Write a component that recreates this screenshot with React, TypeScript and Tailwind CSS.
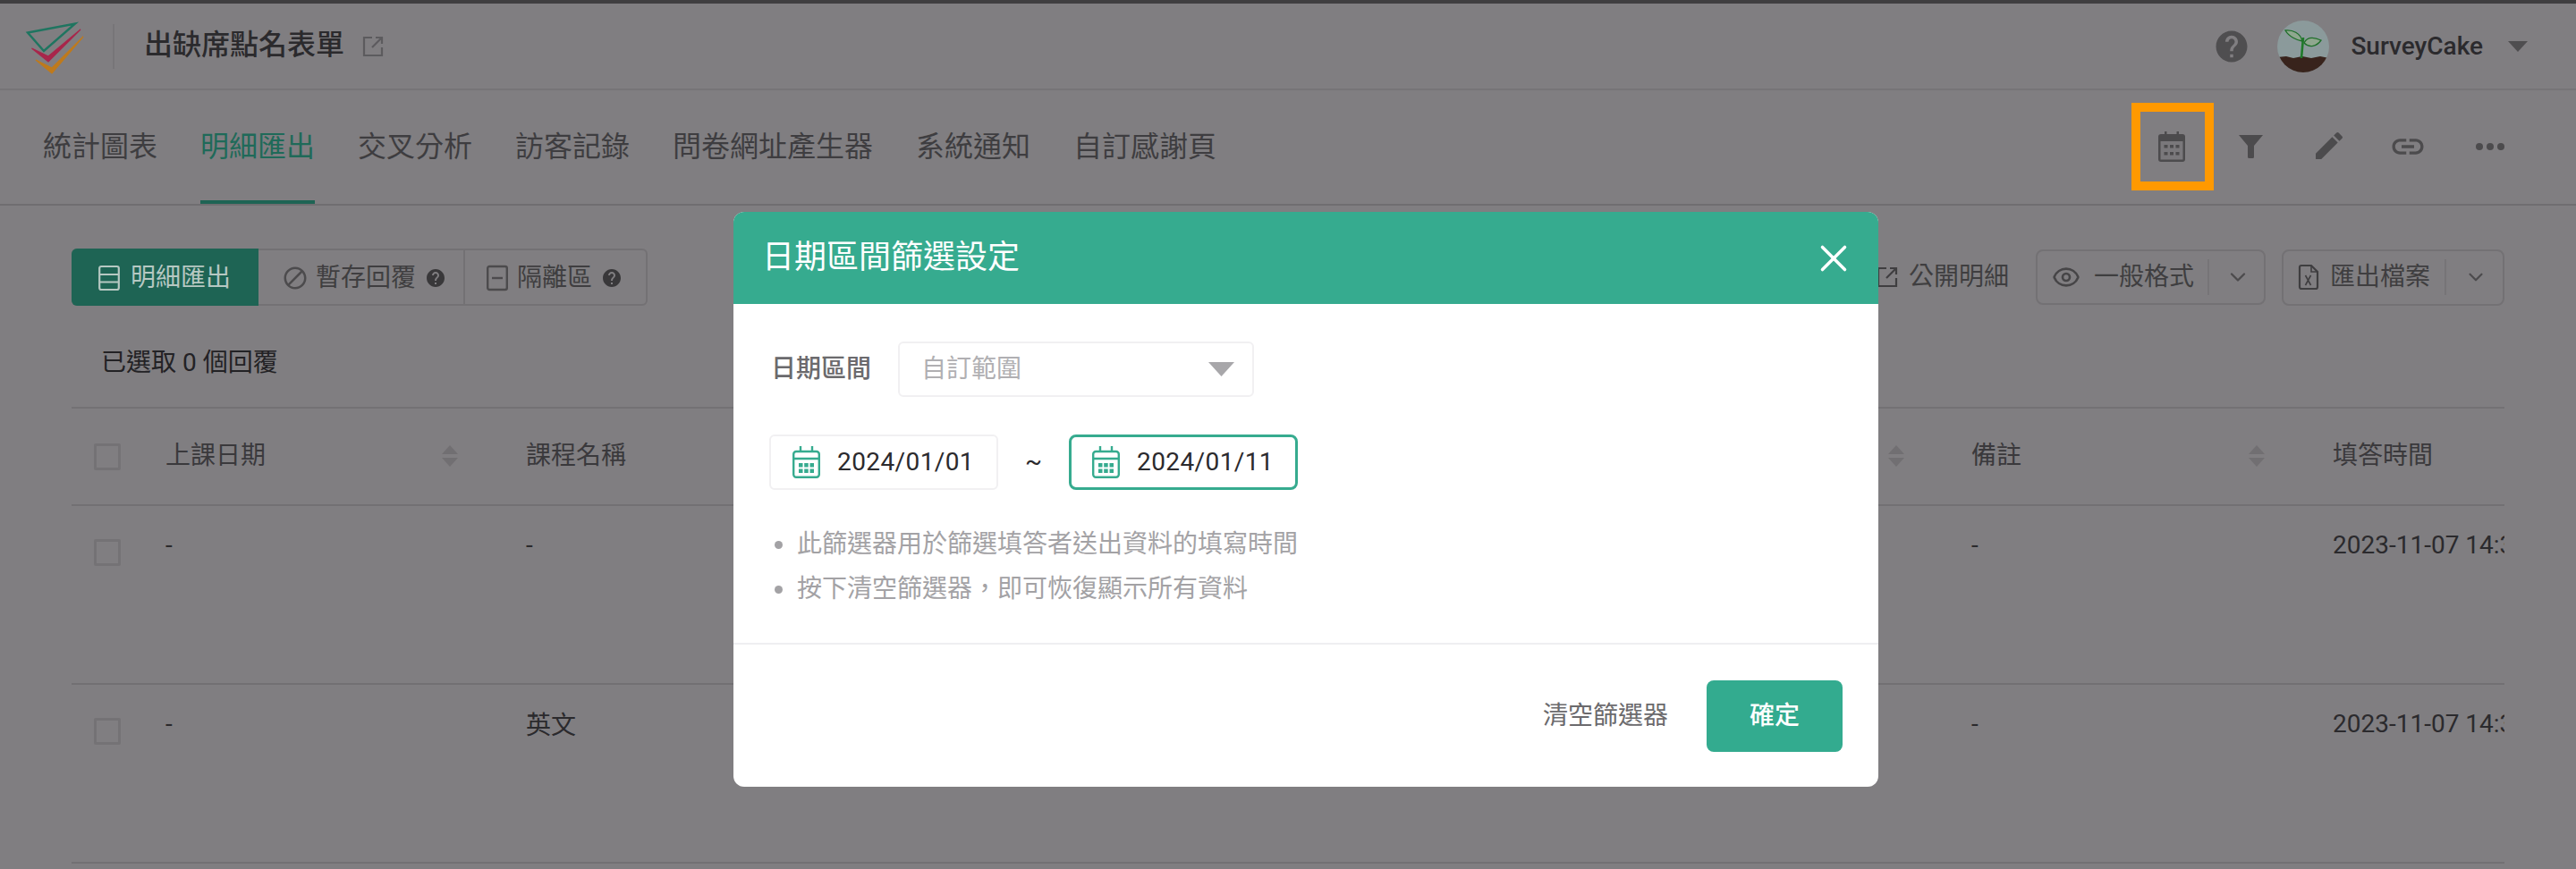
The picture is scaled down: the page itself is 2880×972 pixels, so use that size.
import React from "react";
import { MdEdit, MdLink, MdHelp, MdBlock } from "react-icons/md";
import { ChevronDown, Eye, X } from "lucide-react";

const Ext = ({ c = "#5c5b5e", s = 24 }: { c?: string; s?: number }) => (
  <svg width={s} height={s} viewBox="0 0 24 24" fill="none" stroke={c} strokeWidth="2.2">
    <path d="M11 2H2v20h20v-9" />
    <path d="M11 13 22 2M15 2h7v7" />
  </svg>
);

const Sort = () => (
  <svg width="18" height="24" viewBox="0 0 18 24" fill="#716f72" className="shrink-0">
    <path d="M9 0 18 10H0Z" />
    <path d="M0 14H18L9 24Z" />
  </svg>
);

const GreenCal = () => (
  <svg width="31" height="36" viewBox="0 0 31 36" fill="none" stroke="#36ab8f" strokeWidth="2.4" className="shrink-0">
    <rect x="1.2" y="6" width="28.6" height="28.8" rx="3" />
    <path d="M1.2 14H29.8M9 0V6M22 0V6" />
    <path fill="#36ab8f" stroke="none" d="M7 19h4.5v4.5H7zM13.2 19h4.5v4.5h-4.5zM19.5 19H24v4.5h-4.5zM7 25.5h4.5V30H7zM13.2 25.5h4.5V30h-4.5zM19.5 25.5H24V30h-4.5z" />
  </svg>
);

const Check = () => <div className="w-[30px] h-[30px] border-[3px] border-[#747275] rounded-[2px]" />;

const Tab = ({ t, a }: { t: string; a?: boolean }) => (
  <div className={`h-full flex items-center pt-[2px] border-b-4 ${a ? "border-[#1e6454] text-[#1f6a59]" : "border-transparent text-[#3e3d40]"}`}>{t}</div>
);

const Logo = () => (
  <svg width="66" height="60" viewBox="26 23 66 60" fill="none" strokeLinejoin="miter" className="mt-[5px]">
    <path d="M29 35.5 82 25.5 47 56Z" stroke="#1f7560" strokeWidth="2.4" />
    <path d="M33.5 53 52 68 88 32 52 62Z" fill="#a8264b" stroke="#a8264b" strokeWidth="1.2" />
    <path d="M38 66 56 81 91 40 56 75Z" fill="#bf7a1c" stroke="#bf7a1c" strokeWidth="1.2" />
  </svg>
);

const Avatar = () => (
  <svg width="58" height="60" viewBox="0 0 58 60" className="shrink-0">
    <defs>
      <clipPath id="av"><circle cx="29" cy="30" r="29" /></clipPath>
    </defs>
    <g clipPath="url(#av)">
      <rect width="58" height="60" fill="#8b9a9b" />
      <path d="M0 42 10 41 18 43 28 41 38 43 48 41 58 43V60H0Z" fill="#38231c" />
      <path d="M27 43 29 20" stroke="#1f7a2a" strokeWidth="2.6" fill="none" />
      <path d="M28 24C22 23 13 19 9 12 17 11 26 15 28 24Z" fill="#8fa78f" stroke="#1f6f2a" strokeWidth="1.3" />
      <path d="M30 26C33 20 40 19 49 23 44 30 36 32 30 26Z" fill="#8fa78f" stroke="#1f6f2a" strokeWidth="1.3" />
    </g>
  </svg>
);

const widths = ["w-[105px]", "w-[403px]", "w-[1616px]", "w-[404px]", "w-[192px]"];

export default function App() {
  return (
    <div className="relative w-[2880px] h-[972px] overflow-hidden bg-[#807e81] font-['Roboto','Noto_Sans_CJK_TC',sans-serif]">
      <div className="h-[4px] bg-[#3f3e40]" />
      {/* header */}
      <div className="h-[97px] border-b-[2px] border-[#767477] flex items-center pl-[28px] pr-[54px]">
        <Logo />
        <div className="w-[2px] h-[50px] bg-[#777578] ml-[32px] mr-[33px]" />
        <div className="text-[32px] font-medium text-[#2b2a2d] leading-none pb-[3px]">出缺席點名表單</div>
        <div className="ml-[20px]"><Ext /></div>
        <div className="ml-auto flex items-center">
          <MdHelp size={42} color="#4f4e50" />
          <div className="ml-[30px]"><Avatar /></div>
          <div className="ml-[24px] text-[28px] font-medium text-[#2b2a2d] leading-none">SurveyCake</div>
          <svg width="22" height="12" viewBox="0 0 22 12" className="ml-[28px]"><path d="M0 0H22L11 12Z" fill="#4f4e50" /></svg>
        </div>
      </div>
      {/* tabs */}
      <div className="relative h-[129px] border-b-[2px] border-[#6f6d70] pl-[48px] flex gap-[48px] text-[32px] leading-none">
        <Tab t="統計圖表" />
        <Tab t="明細匯出" a />
        <Tab t="交叉分析" />
        <Tab t="訪客記錄" />
        <Tab t="問卷網址產生器" />
        <Tab t="系統通知" />
        <Tab t="自訂感謝頁" />
        <div className="absolute left-[2383px] top-[14px] w-[92px] h-[98px] border-[10px] border-[#ff9900]" />
        <div className="absolute left-[2413px] top-[46px]">
          <svg width="30" height="34" viewBox="0 0 30 34" className="block">
            <path d="M7 0h2.5v5H7zM20.5 0H23v5h-2.500z" fill="#4c4b4d" />
            <rect y="3" width="30" height="31" rx="3" fill="#4c4b4d" />
            <rect x="2.5" y="11" width="25" height="20.5" fill="#7a787b" />
            <path d="M6.5 15h4v3.5h-4zM13 15h4v3.5h-4zM19.500 15h4v3.5h-4zM6.5 23h4v3.5h-4zM13 23h4v3.5h-4zM19.500 23h4v3.5h-4z" fill="#4c4b4d" />
          </svg>
        </div>
        <div className="absolute left-[2503px] top-[50px]">
          <svg width="27" height="26" viewBox="0 0 27 26" className="block"><path d="M0 0H27L17 12V24.500Q17 26 15.500 26H11.500Q10 26 10 24.500V12Z" fill="#4c4b4d" /></svg>
        </div>
        <div className="absolute left-[2584px] top-[42px]"><MdEdit size={40} color="#4c4b4d" /></div>
        <div className="absolute left-[2671px] top-[42px]"><MdLink size={42} color="#4c4b4d" /></div>
        <div className="absolute left-[2768px] top-[59px] flex gap-[4px]">
          <div className="w-[8px] h-[8px] rounded-full bg-[#4c4b4d]" />
          <div className="w-[8px] h-[8px] rounded-full bg-[#4c4b4d]" />
          <div className="w-[8px] h-[8px] rounded-full bg-[#4c4b4d]" />
        </div>
      </div>
      {/* body */}
      <div className="px-[80px] text-[28px]">
        <div className="mt-[48px] h-[64px] flex items-center justify-between">
          <div className="flex h-full border-[2px] border-[#737174] rounded-[6px] text-[#3f3e40] leading-none">
            <div className="w-[209px] -m-[2px] h-[64px] mr-0 bg-[#1e6454] rounded-l-[6px] flex items-center pt-[2px] pl-[30px] gap-[12px] text-[#b6c8c2]">
              <svg width="24" height="30" viewBox="0 0 24 30" fill="none" stroke="#b6c8c2" strokeWidth="2.2">
                <rect x="1.2" y="2" width="21.6" height="26" rx="2" />
                <path d="M1.2 11H22.800M1.2 19.500H22.800" />
              </svg>
              明細匯出
            </div>
            <div className="w-[231px] border-r-[2px] border-[#737174] flex items-center pt-[2px] pl-[26px] gap-[8px]">
              <MdBlock size={30} color="#4c4b4d" />
              <span className="mr-[2px]">暫存回覆</span>
              <MdHelp size={24} color="#39383a" />
            </div>
            <div className="w-[202px] flex items-center pt-[2px] pl-[24px] gap-[10px]">
              <svg width="24" height="30" viewBox="0 0 24 30" fill="none" stroke="#4c4b4d" strokeWidth="2.4">
                <rect x="1.2" y="2" width="21.6" height="26" rx="2" />
                <path d="M6 15H18" />
              </svg>
              隔離區
              <MdHelp size={24} color="#39383a" />
            </div>
          </div>
          <div className="flex items-center h-full text-[#3f3e40] leading-none">
            <Ext c="#3f3e40" />
            <span className="ml-[12px] mr-[30px]">公開明細</span>
            <div className="w-[257px] h-[62px] border-[2px] border-[#737174] rounded-[8px] flex items-center pl-[16px]">
              <Eye size={32} color="#464547" strokeWidth={2} />
              <span className="ml-[15px]">一般格式</span>
              <div className="w-[2px] h-[40px] bg-[#767477] ml-[15px]" />
              <ChevronDown size={28} color="#4c4b4d" className="ml-[18px]" />
            </div>
            <div className="ml-[18px] w-[249px] h-[63px] border-[2px] border-[#737174] rounded-[8px] flex items-center pl-[16px]">
              <svg width="24" height="30" viewBox="0 0 24 30" fill="none" stroke="#3f3e40" strokeWidth="2.2">
                <path d="M2 4a2 2 0 0 1 2-2h11l7 7v17a2 2 0 0 1-2 2H4a2 2 0 0 1-2-2Z" />
                <path d="M15 2v7h7M8.5 13l6 11M14.5 13l-6 11" strokeWidth="1.6" />
              </svg>
              <span className="ml-[12px]">匯出檔案</span>
              <div className="w-[2px] h-[40px] bg-[#767477] ml-[16px]" />
              <ChevronDown size={26} color="#4c4b4d" className="ml-[20px]" />
            </div>
          </div>
        </div>
        <div className="h-[113px] pt-[14px] pl-[33px] flex items-center text-[#232225] leading-none">已選取 0 個回覆</div>
        {/* table */}
        <div className="border-t-[2px] border-[#737174] w-[2720px] overflow-hidden">
          <div className="h-[109px] border-b-[2px] border-[#727073] flex items-center text-[#3a393c] leading-none">
            <div className={`${widths[0]} pl-[25px]`}><Check /></div>
            <div className={`${widths[1]} flex items-center justify-between pr-[76px] pb-[2px]`}>上課日期<Sort /></div>
            <div className={`${widths[2]} flex items-center justify-between pr-[75px] pb-[2px]`}>課程名稱<Sort /></div>
            <div className={`${widths[3]} flex items-center justify-between pr-[76px] pb-[2px]`}>備註<Sort /></div>
            <div className={`${widths[4]} whitespace-nowrap pb-[2px]`}>填答時間</div>
          </div>
          {[
            ["-", "-"],
            ["-", "英文"],
          ].map((r, i) => (
            <div key={i} className="h-[200px] border-b-[2px] border-[#727073] flex text-[#2b2a2d] leading-[40px]">
              <div className={`${widths[0]} pl-[25px] pt-[37px]`}><Check /></div>
              <div className={`${widths[1]} pt-[24px]`}>{r[0]}</div>
              <div className={`${widths[2]} ${i === 0 ? "pt-[24px]" : "pt-[26px]"}`}>{r[1]}</div>
              <div className={`${widths[3]} pt-[24px]`}>-</div>
              <div className={`${widths[4]} pt-[24px] whitespace-nowrap overflow-hidden`}>2023-11-07 14:35</div>
            </div>
          ))}
        </div>
      </div>
      {/* modal */}
      <div className="absolute left-[820px] top-[237px] w-[1280px] h-[643px] rounded-[12px] bg-white overflow-hidden flex flex-col">
        <div className="h-[103px] bg-[#36ab8f] flex items-center justify-between pl-[32px] pr-[25px] text-white text-[36px] leading-none">
          <span className="pb-[1px]">日期區間篩選設定</span>
          <X size={50} color="#ffffff" strokeWidth={1.7} />
        </div>
        <div className="flex-1 pl-[40px] pt-[42px] text-[28px] leading-none">
          <div className="flex items-center">
            <div className="w-[144px] pl-[2px] font-medium text-[#6b6a6d]">日期區間</div>
            <div className="w-[398px] h-[62px] border-[2px] border-[#f1f0f2] rounded-[6px] flex items-center justify-between pl-[24px] pr-[20px] text-[#b0afb2]">
              <span>自訂範圍</span>
              <svg width="29" height="16" viewBox="0 0 29 16"><path d="M0 0H29L14.500 16Z" fill="#a8a7aa" /></svg>
            </div>
          </div>
          <div className="flex items-center mt-[42px]">
            <div className="w-[256px] h-[62px] border-[2px] border-[#f1f0f2] rounded-[6px] flex items-center pl-[24px] gap-[19px] text-[#2b2a2d] tracking-[0.4px]">
              <GreenCal /><span>2024/01/01</span>
            </div>
            <div className="w-[79px] text-center text-[#2b2a2d] pb-[2px]">~</div>
            <div className="w-[256px] h-[62px] border-[3px] border-[#36ab8f] rounded-[8px] flex items-center pl-[23px] gap-[19px] text-[#2b2a2d] tracking-[0.4px]">
              <GreenCal /><span>2024/01/11</span>
            </div>
          </div>
          <div className="mt-[36px] text-[#a3a2a5]">
            <div className="h-[50px] flex items-center pl-[6px] gap-[16px]">
              <div className="w-[9px] h-[9px] rounded-full bg-[#a3a2a5]" />此篩選器用於篩選填答者送出資料的填寫時間
            </div>
            <div className="h-[50px] flex items-center pl-[6px] gap-[16px]">
              <div className="w-[9px] h-[9px] rounded-full bg-[#a3a2a5]" />按下清空篩選器，即可恢復顯示所有資料
            </div>
          </div>
        </div>
        <div className="h-[161px] border-t-[2px] border-[#efeff1] flex items-center justify-end pr-[40px] gap-[43px] text-[28px] leading-none">
          <span className="text-[#6b6a6d]">清空篩選器</span>
          <div className="w-[152px] h-[80px] rounded-[8px] bg-[#33ab8f] text-white font-medium flex items-center justify-center">確定</div>
        </div>
      </div>
    </div>
  );
}
